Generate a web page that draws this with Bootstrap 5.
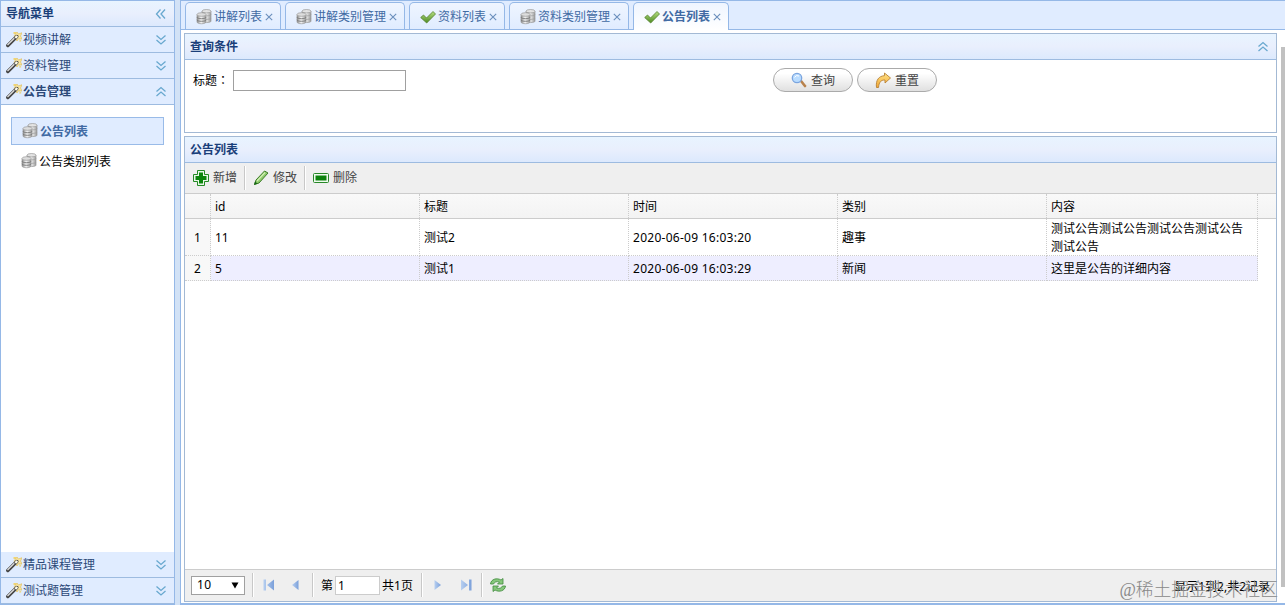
<!DOCTYPE html>
<html lang="zh-CN">
<head>
<meta charset="utf-8">
<title>公告列表</title>
<link href="https://cdn.jsdelivr.net/npm/bootstrap@5.3.0/dist/css/bootstrap.min.css" rel="stylesheet">
<style>
body{font:12px/18px "Noto Sans","Noto Sans CJK SC",sans-serif;color:#000;background:#d2e2f6;height:605px;overflow:hidden}
svg{display:block;flex:none}
.side{width:175px;height:605px;border:1px solid #95b8e7;border-bottom-width:1px;background:#fff;margin-right:5px}
.bar{height:26px;flex:none;border-bottom:1px solid #9dbbe0;color:#1a3f7a;padding:0 7px 0 5px}
.bar-grad{background:linear-gradient(#e8f4ff,#e9effd 50%,#dce9fd)}
.acc{background:#e0ecff;color:#2c4978}
.acc svg:first-child{margin-right:1px}
.node{height:28px;padding-left:10px;color:#000;border:1px solid transparent}
.node span{padding:2px 0 0 2px}
.node.sel{background:#e0ecff;border-color:#99bbe8;color:#416aa3;font-weight:700}
.main{width:1105px;height:605px;border:1px solid #95b8e7;border-right:0;border-bottom-width:2px;background:#fff}
.tabs{height:29px;background:#e0ecff;border-bottom:1px solid #95b8e7;padding-left:4px;gap:4px}
.tab-i{height:27px;border:1px solid #95b8e7;border-bottom:0;border-radius:5px 5px 0 0;background:linear-gradient(#eff5ff,#e0ecff);color:#416aa3;padding:2px 0 0 10px;white-space:nowrap}
.tab-i.on{background:linear-gradient(#eff5ff,#fff);height:28px;font-weight:700;margin-bottom:-1px;padding-bottom:1px}
.tab-i svg:first-child{margin-right:2px}
.tab-i svg:last-child{margin-left:3px}
.box{border:1px solid #a3b9d4;width:1093px;background:#fff}
.q-label{width:40px;font-family:"Noto Sans CJK TC",sans-serif}
.q-input{width:173px;height:21px;border:1px solid #a0a0a0;border-radius:0;padding:0 3px;font-size:12px}
.pill{width:80px;height:24px;border:1px solid #aaa;border-radius:12px;background:linear-gradient(#fff 20%,#e0e0e0);color:#444;font-size:12px;line-height:22px;padding:0;gap:4px}
.tools{height:31px;background:#efefef;border-bottom:1px solid #ccc;color:#444}
.sep{width:2px;height:24px;border-left:1px solid #c8c8c8;border-right:1px solid #fff}
.grid{display:grid;grid-template-columns:26px 209px 209px 209px 209px 211px}
.grid>div{border-right:1px dotted #ccc;border-bottom:1px dotted #ccc;padding:2px 4px 0;display:flex;align-items:center}
.grid>.no{background:#f8f8f8;justify-content:center;padding:2px 0 0}
.g-head{background:linear-gradient(#f9f9f9,#f3f3f3);border-bottom:1px solid #ccc;height:25px}
.g-head>div{border-bottom:0;height:24px}
.r1{height:37px;grid-template-rows:37px}
.r1>div,.r1>.no{padding-top:1px}
.r2{height:25px}
.r2>div:not(.no){background:#eeeeff}
.dt{letter-spacing:.27px}
.pager{height:32px;background:#efefef;border-top:1px solid #ccc;padding-bottom:1px}
.sel-n{width:54px;height:19px;border:1px solid #a0a0a0;background:#fff;padding:0 5px}
.pg-n{width:45px;height:19px;border:1px solid #ccc;border-radius:0;padding:0 2px;font-size:12px}
.thumb{width:4px;height:540px;margin-top:17px;background:#c1c1c1}
.mark-w{right:7px;bottom:5px;font:17.8px/20px "Liberation Serif","Noto Sans CJK SC",serif;color:#888;white-space:nowrap;font-weight:300}
</style>
<script src="https://cdn.jsdelivr.net/npm/bootstrap@5.3.0/dist/js/bootstrap.bundle.min.js"></script>
</head>
<body class="d-flex">
<svg width="0" height="0" class="position-absolute">
<defs>
<linearGradient id="gm" x1="0" x2="1"><stop stop-color="#888"/><stop offset=".45" stop-color="#f5f5f5"/><stop offset="1" stop-color="#999"/></linearGradient>
<linearGradient id="gb" x1="0" x2="1"><stop stop-color="#b7cff0"/><stop offset="1" stop-color="#7ba0da"/></linearGradient>
<linearGradient id="gg" x1="0" y1="0" x2="0" y2="1"><stop stop-color="#b6df81"/><stop offset="1" stop-color="#4d8a22"/></linearGradient>
<linearGradient id="go" x1="0" y1="0" x2="0" y2="1"><stop stop-color="#ffe487"/><stop offset="1" stop-color="#f2a532"/></linearGradient>
<symbol id="wand" viewBox="0 0 16 16"><path d="M7.500 0h2.500v2H7.500zM13.500 7l2 2-2 1z" fill="#f0d574"/><path d="M11 0l1.300 2L16 .8 14.500 4l1.500 3-3.500-.3L11 9 8 4z" fill="#fae6a0" stroke="#e2c469" stroke-width=".8"/><path d="M1.800 13.500l9-9" stroke="#444" stroke-width="3.400" stroke-linecap="round"/><path d="M1.500 13l6.800-6.800" stroke="#dedede" stroke-width="1.300"/><path d="M9.300 6l2-2" stroke="#fffbe8" stroke-width="2.400"/></symbol>
<symbol id="db" viewBox="0 0 16 16"><g stroke="#999" stroke-width=".7"><path d="M6 2.200v10c0 1.800 9 1.800 9 0v-10" fill="url(#gm)"/><ellipse cx="10.500" cy="2.200" rx="4.500" ry="1.700" fill="#e3e3e3"/><path d="M6 5.500c0 1.800 9 1.800 9 0M6 9c0 1.800 9 1.800 9 0" fill="none"/><path d="M1 5.500V13c0 2.300 9 2.300 9 0V5.500" fill="url(#gm)"/><ellipse cx="5.500" cy="5.500" rx="4.500" ry="1.800" fill="#ddd"/></g><path d="M1 8.200c0 2 9 2 9 0M1 10.800c0 2 9 2 9 0" fill="none" stroke="#777" stroke-width=".9"/></symbol>
<symbol id="ok" viewBox="0 0 16 16"><path d="M.7 8.500L3.500 6l3 3L13 2.500 15.500 5 6.700 14z" fill="url(#gg)" stroke="#54812f" stroke-width=".8" stroke-linejoin="round"/></symbol>
<symbol id="x" viewBox="0 0 8 8"><path d="M.8.8l6.400 6.400M7.200.8L.8 7.200" stroke="#6b8fbd" stroke-width="1.100"/></symbol>
<symbol id="dn" viewBox="0 0 12 12"><path d="M1.500 1.500L6 5.500l4.500-4M1.500 6L6 10l4.500-4" fill="none" stroke="#68a8cf" stroke-width="1.300"/></symbol>
<symbol id="up" viewBox="0 0 12 12"><path d="M1.500 5.500L6 1.500l4.500 4M1.500 10L6 6l4.500 4" fill="none" stroke="#68a8cf" stroke-width="1.300"/></symbol>
<symbol id="lf" viewBox="0 0 12 12"><path d="M5.500 1.500L1.500 6l4 4.500M10 1.500L6 6l4 4.500" fill="none" stroke="#68a8cf" stroke-width="1.300"/></symbol>
</defs></svg>

<aside class="side d-flex flex-column flex-shrink-0">
<div class="bar bar-grad d-flex align-items-center justify-content-between fw-bold"><span>导航菜单</span><svg width="12" height="12"><use href="#lf"/></svg></div>
<div class="bar acc d-flex align-items-center"><svg width="16" height="16"><use href="#wand"/></svg><span class="me-auto">视频讲解</span><svg width="12" height="12"><use href="#dn"/></svg></div>
<div class="bar acc d-flex align-items-center"><svg width="16" height="16"><use href="#wand"/></svg><span class="me-auto">资料管理</span><svg width="12" height="12"><use href="#dn"/></svg></div>
<div class="bar acc d-flex align-items-center fw-bold"><svg width="16" height="16"><use href="#wand"/></svg><span class="me-auto">公告管理</span><svg width="12" height="12"><use href="#up"/></svg></div>
<div class="flex-grow-1" style="padding:12px 10px">
<div class="node sel d-flex align-items-center"><svg width="16" height="16"><use href="#db"/></svg><span>公告列表</span></div>
<div class="node d-flex align-items-center" style="margin-top:2px;padding-left:9px"><svg width="16" height="16"><use href="#db"/></svg><span>公告类别列表</span></div>
</div>
<div class="bar acc d-flex align-items-center"><svg width="16" height="16"><use href="#wand"/></svg><span class="me-auto">精品课程管理</span><svg width="12" height="12"><use href="#dn"/></svg></div>
<div class="bar acc d-flex align-items-center"><svg width="16" height="16"><use href="#wand"/></svg><span class="me-auto">测试题管理</span><svg width="12" height="12"><use href="#dn"/></svg></div>
</aside>

<main class="main flex-shrink-0">
<div class="tabs d-flex align-items-end">
<div class="tab-i d-flex align-items-center" style="width:96px"><svg width="16" height="16"><use href="#db"/></svg><span>讲解列表</span><svg width="8" height="8"><use href="#x"/></svg></div>
<div class="tab-i d-flex align-items-center" style="width:120px"><svg width="16" height="16"><use href="#db"/></svg><span>讲解类别管理</span><svg width="8" height="8"><use href="#x"/></svg></div>
<div class="tab-i d-flex align-items-center" style="width:96px"><svg width="16" height="16"><use href="#ok"/></svg><span>资料列表</span><svg width="8" height="8"><use href="#x"/></svg></div>
<div class="tab-i d-flex align-items-center" style="width:120px"><svg width="16" height="16"><use href="#db"/></svg><span>资料类别管理</span><svg width="8" height="8"><use href="#x"/></svg></div>
<div class="tab-i on d-flex align-items-center" style="width:96px"><svg width="16" height="16"><use href="#ok"/></svg><span>公告列表</span><svg width="8" height="8"><use href="#x"/></svg></div>
</div>
<div class="d-flex justify-content-between">
<div style="padding:3px 0 0 3px">
<section class="box" style="height:100px">
<div class="bar bar-grad d-flex align-items-center justify-content-between fw-bold"><span>查询条件</span><svg width="12" height="12"><use href="#up"/></svg></div>
<div class="d-flex align-items-center" style="padding:8px 0 0 8px;height:32px">
<label for="q" class="q-label">标题<span lang="zh-TW">：</span></label><input id="q" class="q-input">
<button class="pill d-flex align-items-center justify-content-center" style="margin-left:367px"><svg width="16" height="16" viewBox="0 0 16 16"><path d="M10 9l4 5" stroke="#b8824c" stroke-width="2.600" stroke-linecap="round"/><circle cx="6" cy="6" r="4.700" fill="#b9dcff" stroke="#7ba5df" stroke-width="1.300"/><path d="M3.500 5.500Q5 2.500 8 4" stroke="#fff" fill="none"/></svg><span style="padding-top:2px">查询</span></button>
<button class="pill d-flex align-items-center justify-content-center ms-1"><svg width="16" height="16" viewBox="0 0 16 16"><path d="M1.500 15.500C.5 8 4 4 9.500 3.700V1l6 5-5.500 5V8C6 8 4 10 3.500 15.500z" fill="url(#go)" stroke="#b88235" stroke-width=".9" stroke-linejoin="round"/></svg><span style="padding-top:2px">重置</span></button>
</div>
</section>
<section class="box d-flex flex-column" style="height:466px;margin-top:3px">
<div class="bar bar-grad d-flex align-items-center fw-bold"><span>公告列表</span></div>
<div class="tools d-flex align-items-center flex-shrink-0" style="padding:0 0 1px 8px">
<svg width="16" height="16" viewBox="0 0 16 16"><path d="M4.500.5h7v4h4v7h-4v4h-7v-4h-4v-7h4z" fill="#e9f7e9" stroke="#248a24"/><path d="M8 2.500v11M2.500 8h11" stroke="#0c850c" stroke-width="4"/></svg><span style="margin-left:4px;padding-top:1px">新增</span><i class="sep" style="margin:0 7px"></i>
<svg width="16" height="16" viewBox="0 0 16 16"><path d="M1.500 14.500l1.500-4.500 8.500-9 3.500 2-9 10z" fill="#8fcb6c" stroke="#3e7c29" stroke-width="1"/><path d="M4 11l8-8.500" stroke="#d2efb5" stroke-width="1.200"/><path d="M1 15l1-3.500 2.500 2z" fill="#176817"/></svg><span style="margin-left:4px;padding-top:1px">修改</span><i class="sep" style="margin:0 7px"></i>
<svg width="16" height="16" viewBox="0 0 16 16"><rect x=".5" y="3.500" width="15" height="9" rx="1" fill="#effbef" stroke="#288828"/><rect x="2.500" y="5.500" width="11" height="5" fill="#0c820c"/></svg><span style="margin-left:4px;padding-top:1px">删除</span>
</div>
<div class="g-head grid"><div></div><div>id</div><div>标题</div><div>时间</div><div>类别</div><div>内容</div></div>
<div class="grid r1"><div class="no">1</div><div>11</div><div>测试2</div><div class="dt">2020-06-09 16:03:20</div><div>趣事</div><div>测试公告测试公告测试公告测试公告测试公告</div></div>
<div class="grid r2"><div class="no">2</div><div>5</div><div>测试1</div><div class="dt">2020-06-09 16:03:29</div><div>新闻</div><div>这里是公告的详细内容</div></div>
<div class="pager mt-auto d-flex align-items-center" style="padding-left:6px">
<div class="sel-n d-flex align-items-center justify-content-between"><span style="letter-spacing:.4px">10</span><svg width="8" height="7" viewBox="0 0 8 7"><path d="M.5.5h7L4 6.500z" fill="#000"/></svg></div>
<i class="sep" style="margin-left:7px;margin-right:9px"></i>
<svg width="12" height="12" viewBox="0 0 12 12"><path d="M.5.5h2.500v11H.5zM11 .5v11L4 6z" fill="url(#gb)"/></svg>
<svg width="8" height="12" viewBox="0 0 8 12" style="margin-left:16px"><path d="M7.500 1v10L1 6z" fill="url(#gb)"/></svg>
<i class="sep" style="margin-left:13px;margin-right:7px"></i>
<span style="padding-top:2px">第</span><input class="pg-n" value="1" style="margin-left:2px"><span style="margin-left:2px;padding-top:2px">共1页</span>
<i class="sep" style="margin-left:8px;margin-right:11px"></i>
<svg width="8" height="12" viewBox="0 0 8 12"><path d="M.5 1v10L7 6z" fill="url(#gb)"/></svg>
<svg width="12" height="12" viewBox="0 0 12 12" style="margin-left:18px"><path d="M1 .5v11L8 6zM9 .5h2.500v11H9z" fill="url(#gb)"/></svg>
<i class="sep" style="margin-left:9px;margin-right:6px"></i>
<svg width="18" height="16" viewBox="0 0 18 16"><g fill="#86c77b" stroke="#3f8a3c" stroke-width=".8" stroke-linejoin="round"><path d="M1.500 7C2 2 8 .5 12 3l2-1.500V7H8.500l2-2C7.500 4 5.500 5 4.500 7z"/><path d="M16.500 9c-.5 5-6.500 6.500-10.500 4l-2 1.500V9h5.500l-2 2c3 1 5 0 6-2z"/></g></svg>
<span class="ms-auto" style="margin-right:6px;padding-top:4px">显示1到2,共2记录</span>
</div>
</section>
</div>
<div class="thumb"></div>
</div>
</main>
<div class="mark-w position-absolute">@稀土掘金技术社区</div>
</body>
</html>
